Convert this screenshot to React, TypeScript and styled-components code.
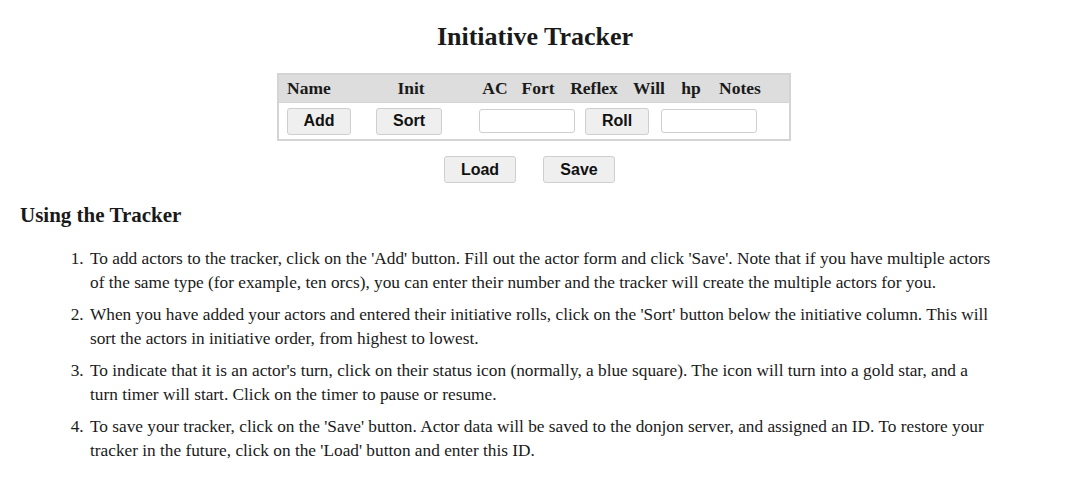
import styled, { createGlobalStyle } from "styled-components";

const GlobalStyle = createGlobalStyle`
  body {
    margin: 0;
    background: #fff;
    color: #1a1a1a;
    font-family: "Liberation Serif", "DejaVu Serif", serif;
  }
`;

const Page = styled.div`
  width: 1070px;
  padding: 20px 20px 0;
  box-sizing: border-box;
`;

const Title = styled.h1`
  margin: 0;
  text-align: center;
  font-size: 26px;
  line-height: 34px;
  font-weight: bold;
`;

const Tracker = styled.div`
  width: 514px;
  margin: 19px auto 0 257px;
  border: 2px solid #d4d4d4;
  box-sizing: border-box;
`;

const HeadRow = styled.div`
  display: flex;
  align-items: center;
  height: 27px;
  background: #dddddd;
  border-bottom: 1px solid #d4d4d4;
  font-weight: bold;
  font-size: 17.5px;
`;

const HeadCell = styled.span<{ $w: number; $ml?: number; $left?: boolean }>`
  width: ${(p) => p.$w}px;
  margin-left: ${(p) => p.$ml ?? 0}px;
  padding-left: ${(p) => (p.$left ? 8 : 0)}px;
  box-sizing: border-box;
  text-align: ${(p) => (p.$left ? "left" : "center")};
  white-space: nowrap;
  flex: none;
`;

const BodyRow = styled.div`
  display: flex;
  align-items: center;
  height: 36px;
  padding-left: 8px;
`;

const Button = styled.button<{ $w?: number; $ml?: number }>`
  width: ${(p) => p.$w ?? 64}px;
  height: 27px;
  margin-left: ${(p) => p.$ml ?? 0}px;
  padding: 0;
  background: #efefef;
  border: 1px solid #cfcfcf;
  border-radius: 3px;
  font-family: "Liberation Sans", Arial, sans-serif;
  font-weight: bold;
  font-size: 16px;
  color: #111;
  flex: none;
`;

const Field = styled.input<{ $ml?: number }>`
  width: 96px;
  height: 24px;
  margin-left: ${(p) => p.$ml ?? 0}px;
  box-sizing: border-box;
  border: 1px solid #cfcfcf;
  border-radius: 3px;
  background: #fff;
  flex: none;
`;

const Actions = styled.div`
  display: flex;
  justify-content: center;
  gap: 27px;
  margin: 15px 0 0 -11px;
`;

const Section = styled.h2`
  margin: 20px 0 0;
  font-size: 21px;
  line-height: 24px;
  font-weight: bold;
`;

const Steps = styled.ol`
  margin: 20px 0 0;
  padding-left: 68px;
  width: 907px;
  font-size: 17.3px;
  line-height: 24px;
  li {
    margin-bottom: 8px;
    padding-left: 2px;
  }
`;

export default function App() {
  return (
    <Page>
      <GlobalStyle />
      <Title>Initiative Tracker</Title>
      <Tracker>
        <HeadRow>
          <HeadCell $w={92} $left>Name</HeadCell>
          <HeadCell $w={50} $ml={15}>Init</HeadCell>
          <HeadCell $w={40} $ml={39}>AC</HeadCell>
          <HeadCell $w={40} $ml={3}>Fort</HeadCell>
          <HeadCell $w={56} $ml={8}>Reflex</HeadCell>
          <HeadCell $w={40} $ml={7}>Will</HeadCell>
          <HeadCell $w={30} $ml={7}>hp</HeadCell>
          <HeadCell $w={50} $ml={9}>Notes</HeadCell>
        </HeadRow>
        <BodyRow>
          <Button $w={64}>Add</Button>
          <Button $w={66} $ml={25}>Sort</Button>
          <Field $ml={37} />
          <Button $w={64} $ml={10}>Roll</Button>
          <Field $ml={12} />
        </BodyRow>
      </Tracker>
      <Actions>
        <Button $w={72}>Load</Button>
        <Button $w={72}>Save</Button>
      </Actions>
      <Section>Using the Tracker</Section>
      <Steps>
        <li>
          To add actors to the tracker, click on the 'Add' button. Fill out the actor form and click
          'Save'. Note that if you have multiple actors of the same type (for example, ten orcs), you can
          enter their number and the tracker will create the multiple actors for you.
        </li>
        <li>
          When you have added your actors and entered their initiative rolls, click on the 'Sort' button
          below the initiative column. This will sort the actors in initiative order, from highest to
          lowest.
        </li>
        <li>
          To indicate that it is an actor's turn, click on their status icon (normally, a blue square). The
          icon will turn into a gold star, and a turn timer will start. Click on the timer to pause or
          resume.
        </li>
        <li>
          To save your tracker, click on the 'Save' button. Actor data will be saved to the donjon server,
          and assigned an ID. To restore your tracker in the future, click on the 'Load' button and enter
          this ID.
        </li>
      </Steps>
    </Page>
  );
}
